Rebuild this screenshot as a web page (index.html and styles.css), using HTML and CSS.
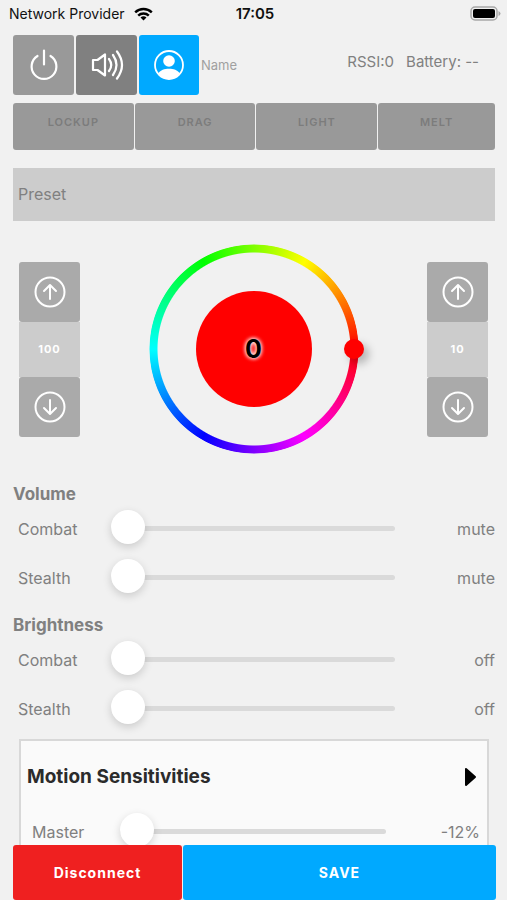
FILE: index.html
```html
<!DOCTYPE html>
<html lang="en">
<head>
<meta charset="utf-8">
<meta name="viewport" content="width=device-width, initial-scale=1">
<title>Device control</title>
<link rel="stylesheet" href="styles.css">
</head>
<body>
<div class="app">
  <header class="status">
    <div class="carrier">
      <span>Network Provider</span>
      <svg width="19" height="14" viewBox="0 0 19 14" fill="none" stroke="#000" stroke-width="2.4" aria-hidden="true">
        <path d="M1.2 5.4a12 12 0 0 1 16.600 0"/>
        <path d="M4.200 8.600a7.600 7.600 0 0 1 10.600 0"/>
        <path d="M9.500 13.600 6.500 10.600a4.400 4.400 0 0 1 6 0z" fill="#000" stroke="none"/>
      </svg>
    </div>
    <time class="clock">17:05</time>
    <svg class="battery" width="31" height="15" viewBox="0 0 31 15" aria-hidden="true">
      <rect x="1" y="1" width="26" height="13" rx="4" fill="none" stroke="#a8a8a8" stroke-width="1.500"/>
      <rect x="3" y="3" width="22" height="9" rx="2" fill="#000"/>
      <path d="M28.500 5q2 1 2 2.500t-2 2.500z" fill="#a8a8a8"/>
    </svg>
  </header>

  <main class="content">
    <div class="toolbar">
      <button class="tool" type="button" aria-label="Power">
        <svg width="32" height="32" viewBox="0 0 32 32" fill="none" stroke="#fff" stroke-width="2.200" stroke-linecap="round">
          <path d="M9.500 7a12.400 12.400 0 1 0 13 0M16 1.500v14"/>
        </svg>
      </button>
      <button class="tool tool-dark" type="button" aria-label="Sound">
        <svg width="34" height="32" viewBox="0 0 34 32" fill="none" stroke="#fff" stroke-width="2.200" stroke-linecap="round" stroke-linejoin="round">
          <path d="M3 11h4.500l7.500-5.500v21l-7.500-5.500H3z"/>
          <path d="M19 10q4.500 6 0 12M23 6q7 10 0 20M27 2.500q10 13.500 0 27" stroke-width="2.200"/>
        </svg>
      </button>
      <button class="tool tool-blue" type="button" aria-label="Profile">
        <svg width="32" height="32" viewBox="0 0 32 32">
          <circle cx="16" cy="16" r="14" fill="none" stroke="#fff" stroke-width="1.800"/>
          <circle cx="16" cy="12" r="5.800" fill="#fff"/>
          <path d="M5.200 24.500C7.500 21 11.500 19.800 16 19.800s8.500 1.200 10.800 4.700A14 14 0 0 1 16 30 14 14 0 0 1 5.200 24.500z" fill="#fff"/>
        </svg>
      </button>
      <input class="name" type="text" placeholder="Name" aria-label="Name">
      <div class="stats"><span>RSSI:0</span><span>Battery: --</span></div>
    </div>

    <div class="effects">
      <button type="button">LOCKUP</button>
      <button type="button">DRAG</button>
      <button type="button">LIGHT</button>
      <button type="button">MELT</button>
    </div>

    <select class="preset" aria-label="Preset">
      <option>Preset</option>
    </select>

    <section class="picker">
      <div class="stepper">
        <button type="button" aria-label="Increase left value">
          <svg width="32" height="32" viewBox="0 0 32 32" fill="none" stroke="#fff" stroke-width="2" stroke-linecap="round" stroke-linejoin="round"><circle cx="16" cy="16" r="14.500"/><path d="M16 23V9.500M10 15l6-6 6 6"/></svg>
        </button>
        <output>100</output>
        <button type="button" aria-label="Decrease left value">
          <svg width="32" height="32" viewBox="0 0 32 32" fill="none" stroke="#fff" stroke-width="2" stroke-linecap="round" stroke-linejoin="round"><circle cx="16" cy="16" r="14.500"/><path d="M16 9v13.500M10 17l6 6 6-6"/></svg>
        </button>
      </div>
      <div class="wheel" role="slider" tabindex="0" aria-label="Hue" aria-valuemin="0" aria-valuemax="360" aria-valuenow="0">
        <div class="ring"></div>
        <div class="swatch">0</div>
        <div class="knob"></div>
      </div>
      <div class="stepper">
        <button type="button" aria-label="Increase right value">
          <svg width="32" height="32" viewBox="0 0 32 32" fill="none" stroke="#fff" stroke-width="2" stroke-linecap="round" stroke-linejoin="round"><circle cx="16" cy="16" r="14.500"/><path d="M16 23V9.500M10 15l6-6 6 6"/></svg>
        </button>
        <output>10</output>
        <button type="button" aria-label="Decrease right value">
          <svg width="32" height="32" viewBox="0 0 32 32" fill="none" stroke="#fff" stroke-width="2" stroke-linecap="round" stroke-linejoin="round"><circle cx="16" cy="16" r="14.500"/><path d="M16 9v13.500M10 17l6 6 6-6"/></svg>
        </button>
      </div>
    </section>

    <section class="levels">
      <h2>Volume</h2>
      <div class="level">
        <label for="vol-combat">Combat</label>
        <input id="vol-combat" type="range" value="0">
        <output for="vol-combat">mute</output>
      </div>
      <div class="level">
        <label for="vol-stealth">Stealth</label>
        <input id="vol-stealth" type="range" value="0">
        <output for="vol-stealth">mute</output>
      </div>
    </section>

    <section class="levels">
      <h2>Brightness</h2>
      <div class="level">
        <label for="bri-combat">Combat</label>
        <input id="bri-combat" type="range" value="0">
        <output for="bri-combat">off</output>
      </div>
      <div class="level">
        <label for="bri-stealth">Stealth</label>
        <input id="bri-stealth" type="range" value="0">
        <output for="bri-stealth">off</output>
      </div>
    </section>

    <section class="panel">
      <button class="panel-head" type="button">
        <span>Motion Sensitivities</span>
        <svg width="13" height="20" viewBox="0 0 13 20" aria-hidden="true"><path d="M2 2v16l9-8z" stroke="#000" stroke-width="2" stroke-linejoin="round"/></svg>
      </button>
      <div class="level">
        <label for="master">Master</label>
        <input id="master" type="range" value="0">
        <output for="master">-12%</output>
      </div>
    </section>
  </main>

  <footer class="actions">
    <button class="disconnect" type="button">Disconnect</button>
    <button class="save" type="button">SAVE</button>
  </footer>
</div>
</body>
</html>
```

FILE: styles.css
```css
* {
  box-sizing: border-box;
}

body {
  margin: 0;
  background: #f1f1f1;
  color: #808080;
  font: 16px/20px Inter, "Liberation Sans", sans-serif;
}

button,
input,
select {
  margin: 0;
  padding: 0;
  border: 0;
  font: inherit;
  color: inherit;
}

button {
  border-radius: 3px;
}

svg {
  display: block;
}

.app {
  display: flex;
  flex-direction: column;
  height: 100vh;
}

.status {
  display: grid;
  grid-template-columns: 1fr auto 1fr;
  align-items: center;
  height: 27px;
  padding: 0 6px 0 9px;
  color: #111;
  font-size: 14px;
}

.carrier {
  display: flex;
  align-items: center;
  gap: 9px;
}

.clock {
  font-size: 15px;
  font-weight: 600;
}

.battery {
  justify-self: end;
}

.content {
  flex: 1;
  min-height: 0;
  padding: 8px 12px 0 13px;
  overflow-y: auto;
  scrollbar-width: none;
}

.toolbar {
  display: flex;
  align-items: center;
  gap: 2px;
}

.tool {
  display: grid;
  flex: none;
  place-items: center;
  width: 61px;
  height: 60px;
  background: #999;
}

.tool-dark {
  background: #808080;
}

.tool-blue {
  width: 60px;
  background: #00a9ff;
}

.name {
  flex: 1;
  min-width: 0;
  background: none;
  font-size: 13px;
}

.name::placeholder {
  color: #a0a0a0;
}

.stats {
  display: flex;
  gap: 12px;
  padding: 0 16px 6px 0;
  font-size: 15px;
}

.effects {
  display: grid;
  grid-template-columns: 121fr 121fr 121fr 117fr;
  gap: 1px;
  margin-top: 8px;
}

.effects button {
  height: 47px;
  padding-bottom: 9px;
  background: #999;
  color: #7c7c7c;
  font-size: 11px;
  font-weight: 600;
  letter-spacing: 1px;
}

.preset {
  display: block;
  width: 100%;
  height: 53px;
  margin-top: 18px;
  padding: 0 5px 2px;
  border-radius: 0;
  background: #ccc;
  appearance: none;
}

.picker {
  display: flex;
  align-items: center;
  justify-content: space-between;
  margin-top: 23px;
  padding: 0 7px 0 6px;
}

.stepper {
  display: grid;
  grid-template-rows: 60px 55px 60px;
  width: 61px;
}

.stepper button {
  display: grid;
  place-items: center;
  background: #aaa;
}

.stepper output {
  display: grid;
  place-items: center;
  background: #ccc;
  color: #fff;
  font-size: 11px;
  font-weight: 700;
  letter-spacing: 1px;
}

.wheel {
  position: relative;
  display: grid;
  place-items: center;
  width: 210px;
  height: 210px;
}

.wheel > * {
  grid-area: 1 / 1;
}

.ring {
  width: 100%;
  height: 100%;
  border-radius: 50%;
  background: conic-gradient(from 90deg, #f00, #f0f, #00f, #0ff, #0f0, #ff0, #f00);
  mask: radial-gradient(closest-side, transparent 96px, #000 97px, #000 104px, transparent 105px);
}

.swatch {
  display: grid;
  place-items: center;
  width: 116px;
  height: 116px;
  border-radius: 50%;
  background: #f00;
  color: #000;
  font-size: 25px;
  font-weight: 700;
  text-shadow: 0 0 4px #fff, 0 0 4px #fff;
}

.knob {
  position: absolute;
  top: 95px;
  right: -5px;
  width: 20px;
  height: 20px;
  border-radius: 50%;
  background: #f00;
  box-shadow: 5px 5px 8px rgba(0, 0, 0, 0.25);
}

.levels {
  padding-top: 12px;
}

.picker + .levels {
  padding-top: 30px;
}

.levels h2 {
  margin: 0 0 1px;
  font-size: 17px;
  font-weight: 700;
}

.level {
  display: grid;
  grid-template-columns: 93px 1fr 100px;
  align-items: center;
  height: 49px;
  padding: 0 0 2px 5px;
}

.level output {
  text-align: right;
}

input[type="range"] {
  width: 100%;
  height: 34px;
  background: none;
  appearance: none;
}

input[type="range"]::-webkit-slider-runnable-track {
  height: 5px;
  border-radius: 3px;
  background: #dadada;
}

input[type="range"]::-webkit-slider-thumb {
  width: 34px;
  height: 34px;
  margin-top: -16px;
  border-radius: 50%;
  background: #fff;
  box-shadow: 0 3px 8px rgba(0, 0, 0, 0.16);
  appearance: none;
}

.panel {
  margin: 5px 6px 0;
  padding: 0 7px 0 6px;
  border: 2px solid #d8d8d8;
  background: #fafafa;
}

.panel-head {
  display: flex;
  align-items: center;
  justify-content: space-between;
  width: 100%;
  height: 67px;
  padding: 4px 3px 0 0;
  background: none;
  color: #2b2b2b;
  font-size: 19px;
  font-weight: 700;
}

.panel .level {
  grid-template-columns: 88px 1fr 94px;
}

.actions {
  display: grid;
  grid-template-columns: 169fr 313fr;
  gap: 1px;
  height: 55px;
  padding: 0 11px 0 13px;
}

.actions button {
  color: #fff;
  font-size: 14px;
  font-weight: 700;
  letter-spacing: 1px;
}

.actions .disconnect {
  background: #ef2020;
}

.actions .save {
  background: #00a9ff;
}
```
